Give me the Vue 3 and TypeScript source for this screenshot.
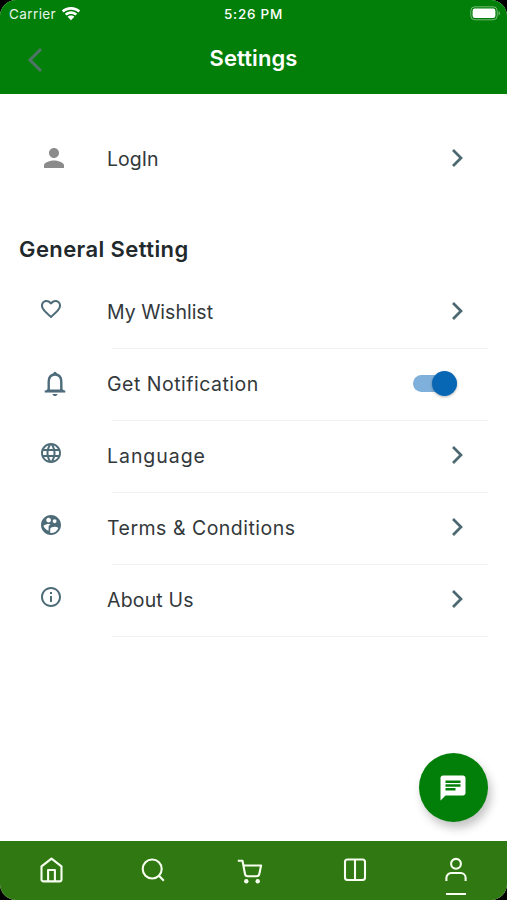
<script setup lang="ts">
import { ref } from 'vue'

type Item = { label: string; icon: string; cls: string }

const items: Item[] = [
  { label: 'My Wishlist', icon: 'heart', cls: 'wishlist' },
  { label: 'Get Notification', icon: 'bell', cls: 'notification' },
  { label: 'Language', icon: 'globe', cls: 'language' },
  { label: 'Terms & Conditions', icon: 'people', cls: 'terms' },
  { label: 'About Us', icon: 'info', cls: 'about' },
]

const paths: Record<string, string> = {
  heart:
    'M16.5 3c-1.74 0-3.41.81-4.5 2.09C10.91 3.81 9.24 3 7.5 3 4.42 3 2 5.42 2 8.5c0 3.78 3.4 6.86 8.55 11.54L12 21.35l1.45-1.32C18.6 15.36 22 12.28 22 8.5 22 5.42 19.58 3 16.5 3zm-4.4 15.55-.1.1-.1-.1C7.14 14.24 4 11.39 4 8.5 4 6.5 5.5 5 7.5 5c1.54 0 3.04.99 3.57 2.36h1.87C13.46 5.99 14.96 5 16.5 5c2 0 3.5 1.5 3.5 3.5 0 2.89-3.14 5.74-7.9 10.05z',
  globe:
    'M11.99 2C6.47 2 2 6.48 2 12s4.47 10 9.99 10C17.52 22 22 17.52 22 12S17.52 2 11.99 2zm6.93 6h-2.95c-.32-1.25-.78-2.45-1.38-3.56 1.84.63 3.37 1.91 4.33 3.56zM12 4.04c.83 1.2 1.48 2.53 1.91 3.96h-3.82c.43-1.43 1.08-2.76 1.91-3.96zM4.26 14C4.1 13.36 4 12.69 4 12s.1-1.36.26-2h3.38c-.08.66-.14 1.32-.14 2s.06 1.34.14 2H4.26zm.82 2h2.95c.32 1.25.78 2.45 1.38 3.56-1.84-.63-3.37-1.9-4.33-3.56zm2.95-8H5.08c.96-1.66 2.49-2.93 4.33-3.56C8.81 5.55 8.35 6.75 8.03 8zM12 19.96c-.83-1.2-1.48-2.53-1.91-3.96h3.82c-.43 1.43-1.08 2.76-1.91 3.96zM14.34 14H9.66c-.09-.66-.16-1.32-.16-2s.07-1.35.16-2h4.68c.09.65.16 1.32.16 2s-.07 1.34-.16 2zm.25 5.56c.6-1.11 1.06-2.31 1.38-3.56h2.95c-.96 1.65-2.49 2.93-4.33 3.56zM16.36 14c.08-.66.14-1.32.14-2s-.06-1.34-.14-2h3.38c.16.64.26 1.31.26 2s-.1 1.36-.26 2h-3.38z',
  people:
    'M12 2C6.48 2 2 6.48 2 12s4.48 10 10 10 10-4.48 10-10S17.52 2 12 2zm3.61 4.34c1.07 0 1.93.86 1.93 1.93 0 1.07-.86 1.93-1.93 1.93-1.07 0-1.93-.86-1.93-1.93-.01-1.07.86-1.93 1.93-1.93zm-6-1.58c1.3 0 2.36 1.06 2.36 2.36 0 1.3-1.06 2.36-2.36 2.36s-2.36-1.06-2.36-2.36c0-1.31 1.05-2.36 2.36-2.36zm0 9.13v3.75c-2.4-.75-4.3-2.6-5.14-4.96 1.05-1.12 3.67-1.69 5.14-1.69.53 0 1.2.08 1.9.22-1.64.87-1.9 2.02-1.9 2.68zM12 20c-.27 0-.53-.01-.79-.04v-4.07c0-1.42 2.94-2.13 4.4-2.13 1.07 0 2.92.39 3.84 1.15C18.28 17.88 15.39 20 12 20z',
  info:
    'M11 7h2v2h-2zm0 4h2v6h-2zm1-9C6.48 2 2 6.48 2 12s4.48 10 10 10 10-4.48 10-10S17.52 2 12 2zm0 18c-4.41 0-8-3.59-8-8s3.59-8 8-8 8 3.59 8 8-3.59 8-8 8z',
}

const notify = ref(true)
</script>

<template>
  <div class="device">
    <div class="screen">
      <header class="top">
        <div class="status">
          <div class="carrier">
            <span>Carrier</span>
            <svg width="20" height="14" viewBox="0 0 20 14" fill="#fff">
              <path d="M10 0C6.300 0 3 1.400.8 3.600l1.900 1.900C4.600 3.700 7.200 2.700 10 2.700s5.400 1 7.300 2.800l1.900-1.900C17 1.400 13.700 0 10 0z" />
              <path d="M10 4.300c-2.400 0-4.600.9-6.200 2.400l1.800 1.800C6.800 7.500 8.300 6.900 10 6.900s3.200.6 4.400 1.600l1.800-1.800C14.600 5.200 12.400 4.300 10 4.300z" />
              <path d="M10 8.500c-1.300 0-2.500.5-3.400 1.200L10 13.200l3.400-3.500C12.500 9 11.300 8.500 10 8.500z" />
            </svg>
          </div>
          <span class="clock">5:26 PM</span>
          <svg class="battery" width="32" height="15" viewBox="0 0 32 15">
            <rect x=".8" y=".8" width="26.400" height="13" rx="4" fill="none" stroke="#fff" stroke-opacity=".45" />
            <rect x="2.600" y="2.600" width="22.800" height="9.400" rx="2.300" fill="#fff" />
            <path d="M28.600 5v4.600c1.800-.8 1.800-3.800 0-4.600z" fill="#fff" fill-opacity=".5" />
          </svg>
        </div>
        <div class="titlebar">
          <svg class="back" width="16" height="26" viewBox="0 0 16 26">
            <path d="M14 2 3 13l11 11" fill="none" stroke="#4f7468" stroke-width="3" />
          </svg>
          <h1>Settings</h1>
        </div>
      </header>

      <main class="content">
        <div class="row login">
          <svg class="person" width="30" height="30" viewBox="0 0 24 24" fill="#8b8b8b">
            <path d="M12 12c2.210 0 4-1.790 4-4s-1.790-4-4-4-4 1.790-4 4 1.790 4 4 4zm0 2c-2.670 0-8 1.340-8 4v2h16v-2c0-2.660-5.330-4-8-4z" />
          </svg>
          <span class="label signin">LogIn</span>
          <svg class="chevron" width="14" height="20" viewBox="0 0 14 20"><path d="m2 2 8 8-8 8" /></svg>
        </div>

        <h2>General Setting</h2>

        <div class="list">
          <div v-for="item in items" :key="item.icon" class="row">
            <svg v-if="item.icon === 'bell'" class="bell" width="24" height="28" viewBox="0 0 24 28">
              <path d="M2.600 21 5.200 18.600h13.600l2.600 2.400" fill="#4e6c7b" />
              <path d="M5.700 20.800v-9C5.700 7.300 8 4.500 12 4.500s6.300 2.800 6.300 7.300v9z" fill="#fff" stroke="#4e6c7b" stroke-width="2.400" />
              <path d="M1.700 21.500h20.600" stroke="#4e6c7b" stroke-width="2.100" />
              <path d="M10 4.200c0-3.400 4-3.400 4 0zM9.500 24h5c-.4 2.700-4.600 2.700-5 0z" fill="#4e6c7b" />
            </svg>
            <svg v-else class="icon" width="24" height="24" viewBox="0 0 24 24" fill="#4e6c78">
              <path :d="paths[item.icon]" />
            </svg>
            <span class="label" :class="item.cls">{{ item.label }}</span>
            <button
              v-if="item.icon === 'bell'"
              class="switch"
              :class="{ on: notify }"
              role="switch"
              :aria-checked="notify"
              @click="notify = !notify"
            ><i></i></button>
            <svg v-else class="chevron" width="14" height="20" viewBox="0 0 14 20"><path d="m2 2 8 8-8 8" /></svg>
          </div>
        </div>
      </main>

      <button class="fab">
        <svg width="30" height="30" viewBox="0 0 24 24" fill="#fff">
          <path d="M20 2H4c-1.100 0-1.990.9-1.990 2L2 22l4-4h14c1.100 0 2-.9 2-2V4c0-1.100-.9-2-2-2zM6 9h12v2H6V9zm8 5H6v-2h8v2zm4-6H6V6h12v2z" />
        </svg>
      </button>

      <nav class="tabs">
        <a>
          <svg width="26" height="28" viewBox="0 0 26 28">
            <path d="M3.500 10.400 13.500 2.600l10 7.800v13a2 2 0 0 1-2 2h-16a2 2 0 0 1-2-2z" />
            <path d="M10.100 25.400V14h6.800v11.400" />
          </svg>
        </a>
        <a>
          <svg width="26" height="28" viewBox="0 0 26 28">
            <circle cx="13.200" cy="13" r="9.500" /><path d="m20 19.800 4.800 5" />
          </svg>
        </a>
        <a class="cart">
          <svg width="26" height="28" viewBox="0 0 26 28">
            <path d="M.8 4.700h4.700L8 18c.3 1.500 1 2.200 2.500 2.200h9.300c1.500 0 2.200-.7 2.500-2.200l1.800-8.500H6.400" />
            <circle class="wheel" cx="9.300" cy="25.200" r="2.200" /><circle class="wheel" cx="20.700" cy="25.200" r="2.200" />
          </svg>
        </a>
        <a>
          <svg width="26" height="28" viewBox="0 0 26 28">
            <rect x="3" y="3.500" width="20" height="20.500" rx="2.500" /><path d="M13 3.500V24" />
          </svg>
        </a>
        <a class="active">
          <svg width="26" height="28" viewBox="0 0 26 28">
            <circle cx="13" cy="7.800" r="4.900" />
            <path d="M3.400 25v-3.200a4.800 4.800 0 0 1 4.800-4.800h9.600a4.800 4.800 0 0 1 4.800 4.800V25" />
          </svg>
        </a>
      </nav>
    </div>
  </div>
</template>

<style>
body {
  margin: 0;
  background: #000;
}
</style>

<style scoped>
.device {
  width: 507px;
  height: 900px;
  background: #000;
  font-family: Inter, "Open Sans", sans-serif;
}
.screen {
  position: relative;
  display: flex;
  flex-direction: column;
  height: 900px;
  background: #fff;
  border-radius: 16px;
  overflow: hidden;
}
.top {
  height: 93.500px;
  background: #027f08;
  color: #fff;
}
.status {
  display: grid;
  grid-template-columns: 1fr auto 1fr;
  align-items: center;
  height: 27px;
  padding: 0 5px 0 9px;
  font-size: 13.500px;
}
.carrier {
  display: flex;
  align-items: center;
  gap: 5px;
  color: #e9f5e9;
}
.carrier span {
  letter-spacing: 0.400px;
}
.clock {
  font-size: 13.500px;
  font-weight: 500;
  letter-spacing: 0.750px;
  margin-left: -4px;
}
.battery {
  justify-self: end;
}
.titlebar {
  display: grid;
  grid-template-columns: 44px 1fr 44px;
  align-items: center;
  height: 64px;
}
.back {
  margin: 2px 0 0 27px;
}
h1 {
  margin: -3px 0 0;
  text-align: center;
  font-size: 22px;
  line-height: 30px;
  font-weight: 600;
  letter-spacing: 0.100px;
}
.content {
  flex: 1;
  min-height: 0;
}
.row {
  display: grid;
  grid-template-columns: 107px 1fr auto;
  align-items: center;
  height: 72px;
}
.login {
  margin-top: 29.500px;
}
.person {
  margin: -2px 0 0 38.500px;
}
.icon {
  margin: -8px 0 0 39px;
}
.bell {
  margin: -3px 0 0 42.500px;
}
.label {
  margin-top: -1px;
  color: #33383b;
  font-size: 19.500px;
  line-height: 28px;
  white-space: nowrap;
}
.notification {
  letter-spacing: 0.500px;
}
.language {
  letter-spacing: 0.950px;
}
.terms {
  letter-spacing: 0.490px;
}
.about {
  letter-spacing: 0.180px;
}
.chevron {
  margin: -2px 42px 0 0;
}
.list .chevron {
  margin-top: -4px;
}
.chevron path {
  fill: none;
  stroke: #4c6870;
  stroke-width: 2.700;
}
h2 {
  margin: 37px 0 0 19px;
  height: 34px;
  line-height: 34px;
  color: #22292c;
  font-size: 22px;
  font-weight: 600;
  letter-spacing: 0.400px;
}
.list {
  padding-top: 11px;
}
.list .label {
  margin-top: -2px;
}
.list .row {
  box-sizing: border-box;
  background: linear-gradient(#f0f0f0, #f0f0f0) 112px 100% / 376px 1px no-repeat;
}
.switch {
  display: flex;
  align-items: center;
  width: 44px;
  height: 17px;
  margin: -3px 50px 0 0;
  padding: 0;
  border: 0;
  border-radius: 9px;
  background: #b9bfc4;
}
.switch.on {
  justify-content: flex-end;
  background: #7eb0db;
}
.switch i {
  width: 25px;
  height: 25px;
  flex: none;
  border-radius: 50%;
  background: #fff;
  box-shadow: 0 1px 3px rgba(0, 0, 0, 0.3);
}
.switch.on i {
  background: #0867b5;
}
.fab {
  position: absolute;
  right: 19.500px;
  bottom: 78px;
  display: flex;
  align-items: center;
  justify-content: center;
  width: 69px;
  height: 69px;
  padding: 0;
  border: 0;
  border-radius: 50%;
  background: #027f08;
  box-shadow: 3px 6px 10px rgba(0, 0, 0, 0.24);
}
.tabs {
  display: grid;
  grid-template-columns: repeat(5, 101.200px);
  justify-content: center;
  height: 59px;
  background: #307811;
}
.tabs a {
  display: flex;
  flex-direction: column;
  align-items: center;
  padding-top: 15px;
}
.tabs .cart {
  padding-right: 7px;
}
.tabs svg {
  fill: none;
  stroke: #f7fff1;
  stroke-width: 2.100;
  stroke-linejoin: round;
}
.tabs .wheel {
  fill: #f7fff1;
  stroke: none;
}
.active::after {
  content: "";
  width: 20px;
  height: 2.500px;
  margin-top: 8.500px;
  background: #f7fff1;
}
</style>
